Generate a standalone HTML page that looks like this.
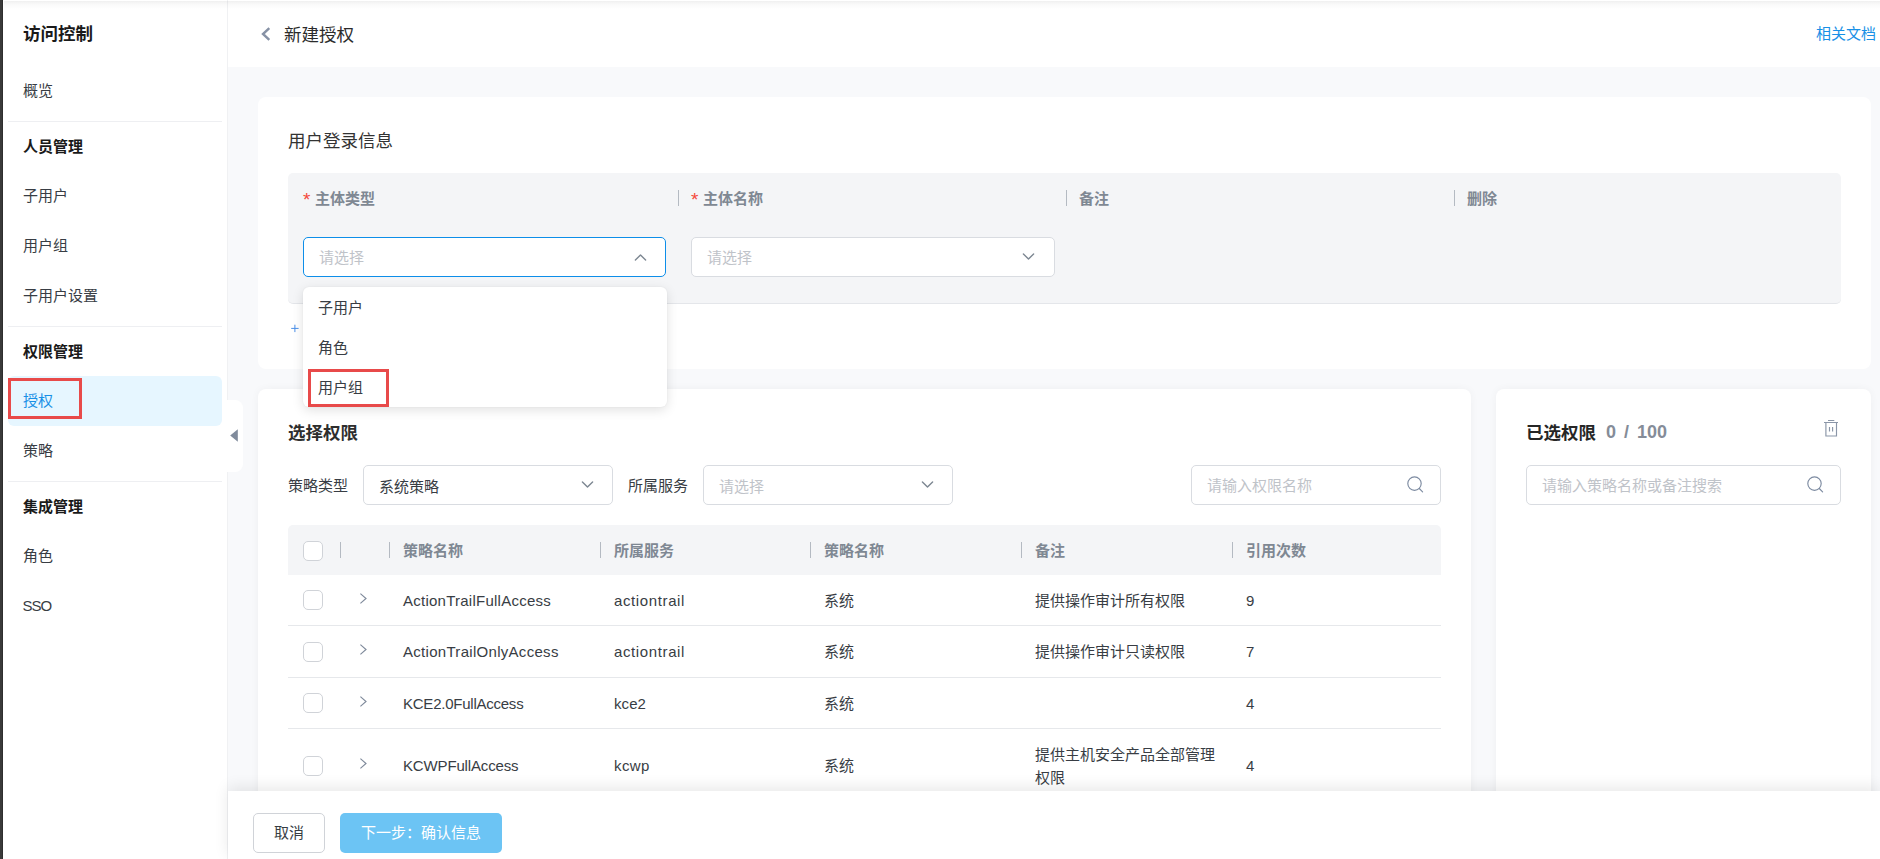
<!DOCTYPE html>
<html lang="zh-CN">
<head>
<meta charset="utf-8">
<title>新建授权</title>
<style>
*{box-sizing:border-box;margin:0;padding:0}
html,body{width:1880px;height:859px;overflow:hidden}
body{position:relative;background:#f8f9fb;font-family:"Liberation Sans","Noto Sans CJK SC",sans-serif;font-size:15px;color:#383d44;-webkit-font-smoothing:antialiased}
.abs{position:absolute}
.t{position:absolute;white-space:nowrap;line-height:20px;height:20px;margin-top:1px}
.ast{display:inline-block;width:12px;margin-left:0;color:#f5483b;font-weight:normal;font-size:19px;vertical-align:-2px;line-height:20px}
.b{font-weight:bold}
/* left bar + sidebar */
#lbar{left:0;top:0;width:3px;height:859px;background:#3a3a3a;border-right:1px solid #2e2e2e}
#side{left:3px;top:0;width:225px;height:859px;background:#fff;border-right:1px solid #f0f1f3}
.hr{position:absolute;left:8px;width:214px;height:1px;background:#eeeff2}
.nav{left:23px;color:#383d44}
.navh{left:23px;color:#1a1a1a;font-weight:bold}
#sel{left:8px;top:376px;width:214px;height:50px;background:#e6f6ff;border-radius:6px}
.red{position:absolute;border:3px solid #e84a4a}
/* header */
#hdr{left:228px;top:0;width:1652px;height:67px;background:#fff}
#topshadow{left:4px;top:1px;width:1876px;height:8px;background:linear-gradient(rgba(0,0,0,.06),rgba(0,0,0,.025) 40%,rgba(0,0,0,0))}
.card{position:absolute;background:#fff;border-radius:8px}
.gray{position:absolute;background:#f4f5f7}
.th{color:#7f8893;font-weight:bold}
.sep{position:absolute;width:1px;height:16px;background:#b4bac2;margin-top:-1px}
.inp{position:absolute;height:40px;border:1px solid #d9dce1;border-radius:5px;background:#fff}
.ph{color:#bfc3c9}
.cb{position:absolute;width:20px;height:20px;border:1px solid #d0d3d8;border-radius:5px;background:#fff}
.row{position:absolute;left:288px;width:1153px;height:1px;background:#e6e8eb}
svg{position:absolute;overflow:visible}
</style>
</head>
<body>
<div id="side" class="abs"></div>
<div id="hdr" class="abs"></div>

<!-- sidebar content -->
<div class="t b" style="left:23px;top:23px;font-size:17.5px;color:#1a1a1a">访问控制</div>
<div class="t nav" style="top:80px">概览</div>
<div class="hr" style="top:121px"></div>
<div class="t navh" style="top:136px">人员管理</div>
<div class="t nav" style="top:185px">子用户</div>
<div class="t nav" style="top:235px">用户组</div>
<div class="t nav" style="top:285px">子用户设置</div>
<div class="hr" style="top:326px"></div>
<div class="t navh" style="top:341px">权限管理</div>
<div id="sel" class="abs"></div>
<div class="t nav" style="top:390px;color:#1890e6">授权</div>
<div class="red" style="left:8px;top:378px;width:74px;height:41px"></div>
<div class="t nav" style="top:440px">策略</div>
<div class="hr" style="top:481px"></div>
<div class="t navh" style="top:496px">集成管理</div>
<div class="t nav" style="top:545px">角色</div>
<div class="t nav" style="top:595px;left:22.5px;letter-spacing:-1px">SSO</div>

<!-- header -->
<svg style="left:261px;top:27px" width="10" height="14" viewBox="0 0 10 14"><path d="M8.3 1.2 L2 7 L8.3 12.8" fill="none" stroke="#8691a5" stroke-width="2.4" stroke-linejoin="miter"/></svg>
<div class="t" style="left:284px;top:24px;font-size:17.5px;color:#2b2b2b">新建授权</div>
<div class="t" style="left:1816px;top:23px;color:#1890e6">相关文档</div>

<!-- card 1 -->
<div class="card" style="left:258px;top:97px;width:1613px;height:272px"></div>
<div class="t" style="left:288px;top:130px;font-size:17.5px;color:#333">用户登录信息</div>
<div class="gray" style="left:288px;top:173px;width:1553px;height:131px;border-radius:5px;border-bottom:1px solid #e4e6ea"></div>
<div class="t th" style="left:303px;top:188px"><span class="ast">*</span>主体类型</div>
<div class="sep" style="left:678px;top:191px"></div>
<div class="t th" style="left:691px;top:188px"><span class="ast">*</span>主体名称</div>
<div class="sep" style="left:1066px;top:191px"></div>
<div class="t th" style="left:1079px;top:188px">备注</div>
<div class="sep" style="left:1454px;top:191px"></div>
<div class="t th" style="left:1467px;top:188px">删除</div>

<div class="inp" style="left:303px;top:237px;width:363px;border-color:#0d8ee9"></div>
<div class="t ph" style="left:319px;top:247px">请选择</div>
<svg style="left:634px;top:253px" width="13" height="8" viewBox="0 0 13 8"><path d="M1.4 7 L6.5 1.9 L11.6 7" fill="none" stroke="#7d8792" stroke-width="1.4" stroke-linecap="round" stroke-linejoin="round"/></svg>
<div class="inp" style="left:691px;top:237px;width:364px"></div>
<div class="t ph" style="left:707px;top:247px">请选择</div>
<svg style="left:1022px;top:253px" width="13" height="8" viewBox="0 0 13 8"><path d="M1.4 1 L6.5 6.1 L11.6 1" fill="none" stroke="#7d8792" stroke-width="1.4" stroke-linecap="round" stroke-linejoin="round"/></svg>

<svg style="left:291px;top:324px" width="8" height="8" viewBox="0 0 8 8"><path d="M0.2 4.4 H7.6 M3.9 0.7 V8.1" stroke="#4a90e8" stroke-width="1" fill="none"/></svg>

<!-- card 2 -->
<div class="card" style="left:258px;top:389px;width:1213px;height:480px;box-shadow:0 0 8px rgba(20,30,50,.045)"></div>
<div class="t b" style="left:288px;top:422px;font-size:17.5px;color:#2e2e2e">选择权限</div>
<div class="t" style="left:288px;top:475px">策略类型</div>
<div class="inp" style="left:363px;top:465px;width:250px"></div>
<div class="t" style="left:379px;top:476px">系统策略</div>
<svg style="left:581px;top:481px" width="13" height="8" viewBox="0 0 13 8"><path d="M1.4 1 L6.5 6.1 L11.6 1" fill="none" stroke="#7d8792" stroke-width="1.4" stroke-linecap="round" stroke-linejoin="round"/></svg>
<div class="t" style="left:628px;top:475px">所属服务</div>
<div class="inp" style="left:703px;top:465px;width:250px"></div>
<div class="t ph" style="left:719px;top:476px">请选择</div>
<svg style="left:921px;top:481px" width="13" height="8" viewBox="0 0 13 8"><path d="M1.4 1 L6.5 6.1 L11.6 1" fill="none" stroke="#7d8792" stroke-width="1.4" stroke-linecap="round" stroke-linejoin="round"/></svg>
<div class="inp" style="left:1191px;top:465px;width:250px"></div>
<div class="t ph" style="left:1207px;top:475px">请输入权限名称</div>
<svg style="left:1407px;top:476px" width="17" height="17" viewBox="0 0 17 17"><circle cx="7.5" cy="7.6" r="6.7" fill="none" stroke="#7d8ba1" stroke-width="1.15"/><path d="M12.3 12.5 L15.6 15.8" stroke="#7d8ba1" stroke-width="1.15" stroke-linecap="round"/></svg>

<div class="gray" style="left:288px;top:525px;width:1153px;height:50px;border-radius:5px 5px 0 0"></div>
<div class="cb" style="left:303px;top:541px"></div>
<div class="sep" style="left:340px;top:543px"></div>
<div class="sep" style="left:389px;top:543px"></div>
<div class="t th" style="left:403px;top:540px">策略名称</div>
<div class="sep" style="left:600px;top:543px"></div>
<div class="t th" style="left:614px;top:540px">所属服务</div>
<div class="sep" style="left:810px;top:543px"></div>
<div class="t th" style="left:824px;top:540px">策略名称</div>
<div class="sep" style="left:1021px;top:543px"></div>
<div class="t th" style="left:1035px;top:540px">备注</div>
<div class="sep" style="left:1232px;top:543px"></div>
<div class="t th" style="left:1246px;top:540px">引用次数</div>
<div class="cb" style="left:303px;top:590px"></div>
<svg style="left:359px;top:592px" width="9" height="13" viewBox="0 0 9 13"><path d="M1.4 1.6 L7 6.5 L1.4 11.4" fill="none" stroke="#7f8a9b" stroke-width="1.15" stroke-linejoin="miter"/></svg>
<div class="t lat" style="left:403px;top:590px;letter-spacing:0.246px">ActionTrailFullAccess</div>
<div class="t lat" style="left:614px;top:590px;letter-spacing:0.618px">actiontrail</div>
<div class="t" style="left:824px;top:590px">系统</div>
<div class="t" style="left:1035px;top:590px">提供操作审计所有权限</div>
<div class="t lat" style="left:1246px;top:590px">9</div>
<div class="cb" style="left:303px;top:642px"></div>
<svg style="left:359px;top:643px" width="9" height="13" viewBox="0 0 9 13"><path d="M1.4 1.6 L7 6.5 L1.4 11.4" fill="none" stroke="#7f8a9b" stroke-width="1.15" stroke-linejoin="miter"/></svg>
<div class="t lat" style="left:403px;top:641px;letter-spacing:0.295px">ActionTrailOnlyAccess</div>
<div class="t lat" style="left:614px;top:641px;letter-spacing:0.618px">actiontrail</div>
<div class="t" style="left:824px;top:641px">系统</div>
<div class="t" style="left:1035px;top:641px">提供操作审计只读权限</div>
<div class="t lat" style="left:1246px;top:641px">7</div>
<div class="cb" style="left:303px;top:693px"></div>
<svg style="left:359px;top:695px" width="9" height="13" viewBox="0 0 9 13"><path d="M1.4 1.6 L7 6.5 L1.4 11.4" fill="none" stroke="#7f8a9b" stroke-width="1.15" stroke-linejoin="miter"/></svg>
<div class="t lat" style="left:403px;top:693px;letter-spacing:-0.239px">KCE2.0FullAccess</div>
<div class="t lat" style="left:614px;top:693px;letter-spacing:0.078px">kce2</div>
<div class="t" style="left:824px;top:693px">系统</div>
<div class="t lat" style="left:1246px;top:693px">4</div>
<div class="cb" style="left:303px;top:756px"></div>
<svg style="left:359px;top:757px" width="9" height="13" viewBox="0 0 9 13"><path d="M1.4 1.6 L7 6.5 L1.4 11.4" fill="none" stroke="#7f8a9b" stroke-width="1.15" stroke-linejoin="miter"/></svg>
<div class="t lat" style="left:403px;top:755px;letter-spacing:-0.152px">KCWPFullAccess</div>
<div class="t lat" style="left:614px;top:755px;letter-spacing:0.403px">kcwp</div>
<div class="t" style="left:824px;top:755px">系统</div>
<div class="t" style="left:1035px;top:742px;height:auto;line-height:23px">提供主机安全产品全部管理<br>权限</div>
<div class="t lat" style="left:1246px;top:755px">4</div>
<div class="row" style="top:625px"></div>
<div class="row" style="top:677px"></div>
<div class="row" style="top:728px"></div>

<!-- card 3 -->
<div class="card" style="left:1496px;top:389px;width:375px;height:480px;box-shadow:0 0 8px rgba(20,30,50,.045)"></div>
<div class="t b" style="left:1526px;top:422px;font-size:17.5px;color:#262626">已选权限</div>
<div class="t b" style="left:1606px;top:421px;font-size:18px;word-spacing:3px;color:#858c98">0 / 100</div>
<svg style="left:1823px;top:419px" width="16" height="19" viewBox="0 0 16 19"><path d="M5 1.5 H11.3 M1 3.5 H15 M2.9 3.5 V17 H13.5 V3.5 M6.5 8 V12.6 M9.6 8 V12.6" fill="none" stroke="#8a95a7" stroke-width="1.15"/></svg>
<div class="inp" style="left:1526px;top:465px;width:315px"></div>
<div class="t ph" style="left:1542px;top:475px">请输入策略名称或备注搜索</div>
<svg style="left:1807px;top:476px" width="17" height="17" viewBox="0 0 17 17"><circle cx="7.5" cy="7.6" r="6.7" fill="none" stroke="#7d8ba1" stroke-width="1.15"/><path d="M12.3 12.5 L15.6 15.8" stroke="#7d8ba1" stroke-width="1.15" stroke-linecap="round"/></svg>

<!-- dropdown -->
<div class="abs" style="left:303px;top:287px;width:364px;height:120px;background:#fff;border-radius:6px;box-shadow:0 3px 12px rgba(0,0,0,.12),0 0 2px rgba(0,0,0,.06)"></div>
<div class="t" style="left:318px;top:297px">子用户</div>
<div class="t" style="left:318px;top:337px">角色</div>
<div class="t" style="left:318px;top:377px">用户组</div>
<div class="red" style="left:308px;top:369px;width:81px;height:38px"></div>

<!-- collapse handle -->
<div class="abs" style="left:227px;top:400px;width:15.5px;height:72px;background:#fff;border-radius:0 8px 8px 0"></div>
<svg style="left:230px;top:429px" width="8" height="13" viewBox="0 0 8 13"><path d="M7.8 0.2 L0.2 6.5 L7.8 12.8 Z" fill="#808b9c"/></svg>

<!-- footer -->
<div class="abs" style="left:228px;top:791px;width:1652px;height:68px;background:#fff;box-shadow:0 -4px 14px rgba(0,0,0,.09)"></div>
<div class="abs" style="left:253px;top:813px;width:72px;height:40px;border:1px solid #d0d3d8;border-radius:5px;background:#fff"></div>
<div class="t" style="left:274px;top:822px">取消</div>
<div class="abs" style="left:340px;top:813px;width:162px;height:40px;border-radius:5px;background:#6cc4f4"></div>
<div class="t" style="left:361px;top:822px;color:#fff">下一步：确认信息</div>

<div id="topshadow" class="abs"></div>
<div id="lbar" class="abs"></div>
</body>
</html>
